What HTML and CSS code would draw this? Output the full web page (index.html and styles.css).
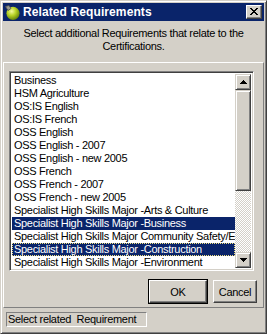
FILE: index.html
```html
<!DOCTYPE html>
<html>
<head>
<meta charset="utf-8">
<link rel="stylesheet" href="styles.css">
</head>
<body>
<div class="window">
  <div class="titlebar">
    <svg class="app-icon" width="16" height="16" viewBox="0 0 16 16">
      <defs>
        <radialGradient id="ball" cx="0.4" cy="0.35" r="0.7">
          <stop offset="0" stop-color="#f4f9a0"/>
          <stop offset="0.45" stop-color="#b8d428"/>
          <stop offset="1" stop-color="#5c7a08"/>
        </radialGradient>
      </defs>
      <circle cx="9" cy="9.3" r="6.6" fill="url(#ball)"/>
      <path d="M1.5 2.5 L5 1.5 L7 4.5 L4 6.5 Z" fill="#9a9a90" stroke="#505048" stroke-width="0.8"/>
    </svg>
    <span class="title">Related Requirements</span>
    <div class="close">
      <svg width="8" height="7" viewBox="0 0 8 7">
        <path d="M0 0h2v1h-2zM6 0h2v1h-2zM1 1h2v1h-2zM5 1h2v1h-2zM2 2h4v1h-4zM3 3h2v1h-2zM2 4h4v1h-4zM1 5h2v1h-2zM5 5h2v1h-2zM0 6h2v1h-2zM6 6h2v1h-2z" fill="#000"/>
      </svg>
    </div>
  </div>
  <div class="content">
    <p class="prompt">Select additional Requirements that relate to the<br>Certifications.</p>
    <div class="panel">
      <div class="listbox">
        <ul class="items">
          <li>Business</li>
          <li>HSM Agriculture</li>
          <li>OS:IS English</li>
          <li>OS:IS French</li>
          <li>OSS English</li>
          <li>OSS English - 2007</li>
          <li>OSS English - new 2005</li>
          <li>OSS French</li>
          <li>OSS French - 2007</li>
          <li>OSS French - new 2005</li>
          <li>Specialist High Skills Major -Arts &amp; Culture</li>
          <li class="sel">Specialist High Skills Major -Business</li>
          <li>Specialist High Skills Major Community Safety/E</li>
          <li class="sel focus">Specialist High Skills Major -Construction</li>
          <li>Specialist High Skills Major -Environment</li>
        </ul>
        <div class="scrollbar">
          <div class="sb-btn">
            <svg width="7" height="4" viewBox="0 0 7 4"><path d="M3 0h1v1h1v1h1v1h1v1h-7v-1h1v-1h1v-1h1z" fill="#000"/></svg>
          </div>
          <div class="sb-thumb"></div>
          <div class="sb-track"></div>
          <div class="sb-btn">
            <svg width="7" height="4" viewBox="0 0 7 4"><path d="M0 0h7v1h-1v1h-1v1h-1v1h-1v-1h-1v-1h-1v-1h-1z" fill="#000"/></svg>
          </div>
        </div>
      </div>
      <div class="buttons">
        <div class="btn btn-ok">OK</div>
        <div class="btn btn-cancel">Cancel</div>
      </div>
    </div>
    <div class="statusbar">
      <div class="status">Select related&nbsp; Requirement</div>
    </div>
  </div>
</div>
</body>
</html>
```

FILE: styles.css
```css
html, body {
  margin: 0;
  padding: 0;
  width: 267px;
  height: 334px;
  overflow: hidden;
  background: #d4d0c8;
}

.window {
  box-sizing: border-box;
  width: 267px;
  height: 334px;
  background: #d4d0c8;
  border: 1px solid;
  border-color: #d4d0c8 #404040 #404040 #d4d0c8;
  box-shadow: inset 1px 1px #ffffff, inset -1px -1px #808080;
  padding: 2px;
  display: flex;
  flex-direction: column;
  font-family: "Liberation Sans", Arial, sans-serif;
  font-size: 11px;
  letter-spacing: -0.3px;
  color: #000;
}

.titlebar {
  height: 18px;
  background: #0a246a;
  display: flex;
  align-items: center;
  padding: 0 2px 0 1px;
}

.app-icon {
  flex: none;
  margin-right: 3px;
}

.title {
  flex: 1;
  color: #fff;
  font-weight: bold;
  font-size: 12px;
  letter-spacing: 0.1px;
}

.close {
  box-sizing: border-box;
  width: 16px;
  height: 14px;
  background: #d4d0c8;
  border: 1px solid;
  border-color: #fff #404040 #404040 #fff;
  box-shadow: inset -1px -1px #808080;
  display: flex;
  align-items: center;
  justify-content: center;
  padding: 0 1px 1px 0;
}

.content {
  flex: 1;
  display: flex;
  flex-direction: column;
}

.prompt {
  margin: 6px 0 0;
  text-align: center;
  line-height: 13px;
  height: 35px;
}

.panel {
  box-sizing: border-box;
  border: 1px solid;
  border-color: #fff #808080 #808080 #fff;
  padding: 8px 6px 0 5px;
  height: 246px;
  display: flex;
  flex-direction: column;
}

.listbox {
  box-sizing: border-box;
  width: 245px;
  height: 200px;
  background: #fff;
  border: 1px solid;
  border-color: #808080 #fff #fff #808080;
  box-shadow: inset 1px 1px #404040, inset -1px -1px #d4d0c8;
  padding: 2px;
  display: flex;
}

.items {
  list-style: none;
  margin: 0;
  padding: 0;
  flex: 1;
  min-width: 0;
  overflow: hidden;
}

.items li {
  height: 13px;
  line-height: 13px;
  padding-left: 2px;
  white-space: nowrap;
  overflow: hidden;
  box-sizing: border-box;
}

.items li.sel {
  background: #0a246a;
  color: #fff;
}

.items li.focus {
  outline: 1px dotted #f0e080;
  outline-offset: -1px;
}

.scrollbar {
  width: 16px;
  display: flex;
  flex-direction: column;
}

.sb-btn {
  box-sizing: border-box;
  height: 16px;
  background: #d4d0c8;
  border: 1px solid;
  border-color: #d4d0c8 #404040 #404040 #d4d0c8;
  box-shadow: inset 1px 1px #fff, inset -1px -1px #808080;
  display: flex;
  align-items: center;
  justify-content: center;
}

.sb-thumb {
  box-sizing: border-box;
  height: 101px;
  background: #d4d0c8;
  border: 1px solid;
  border-color: #d4d0c8 #404040 #404040 #d4d0c8;
  box-shadow: inset 1px 1px #fff, inset -1px -1px #808080;
}

.sb-track {
  flex: 1;
  background: repeating-conic-gradient(#d4d0c8 0 25%, #ffffff 0 50%) 0 0 / 2px 2px;
}

.buttons {
  display: flex;
  justify-content: flex-end;
  gap: 6px;
  margin-top: 9px;
  padding-right: 0;
}

.btn {
  box-sizing: border-box;
  height: 23px;
  background: #d4d0c8;
  display: flex;
  align-items: center;
  justify-content: center;
  border: 1px solid;
  border-color: #fff #404040 #404040 #fff;
  box-shadow: inset -1px -1px #808080;
}

.btn-ok {
  width: 58px;
  outline: 1px solid #000;
}

.btn-cancel {
  width: 44px;
}

.statusbar {
  padding: 4px 0 0 3px;
}

.status {
  box-sizing: border-box;
  width: 141px;
  height: 15px;
  line-height: 13px;
  border: 1px solid;
  border-color: #808080 #fff #fff #808080;
  padding-left: 1px;
  white-space: nowrap;
}
```
